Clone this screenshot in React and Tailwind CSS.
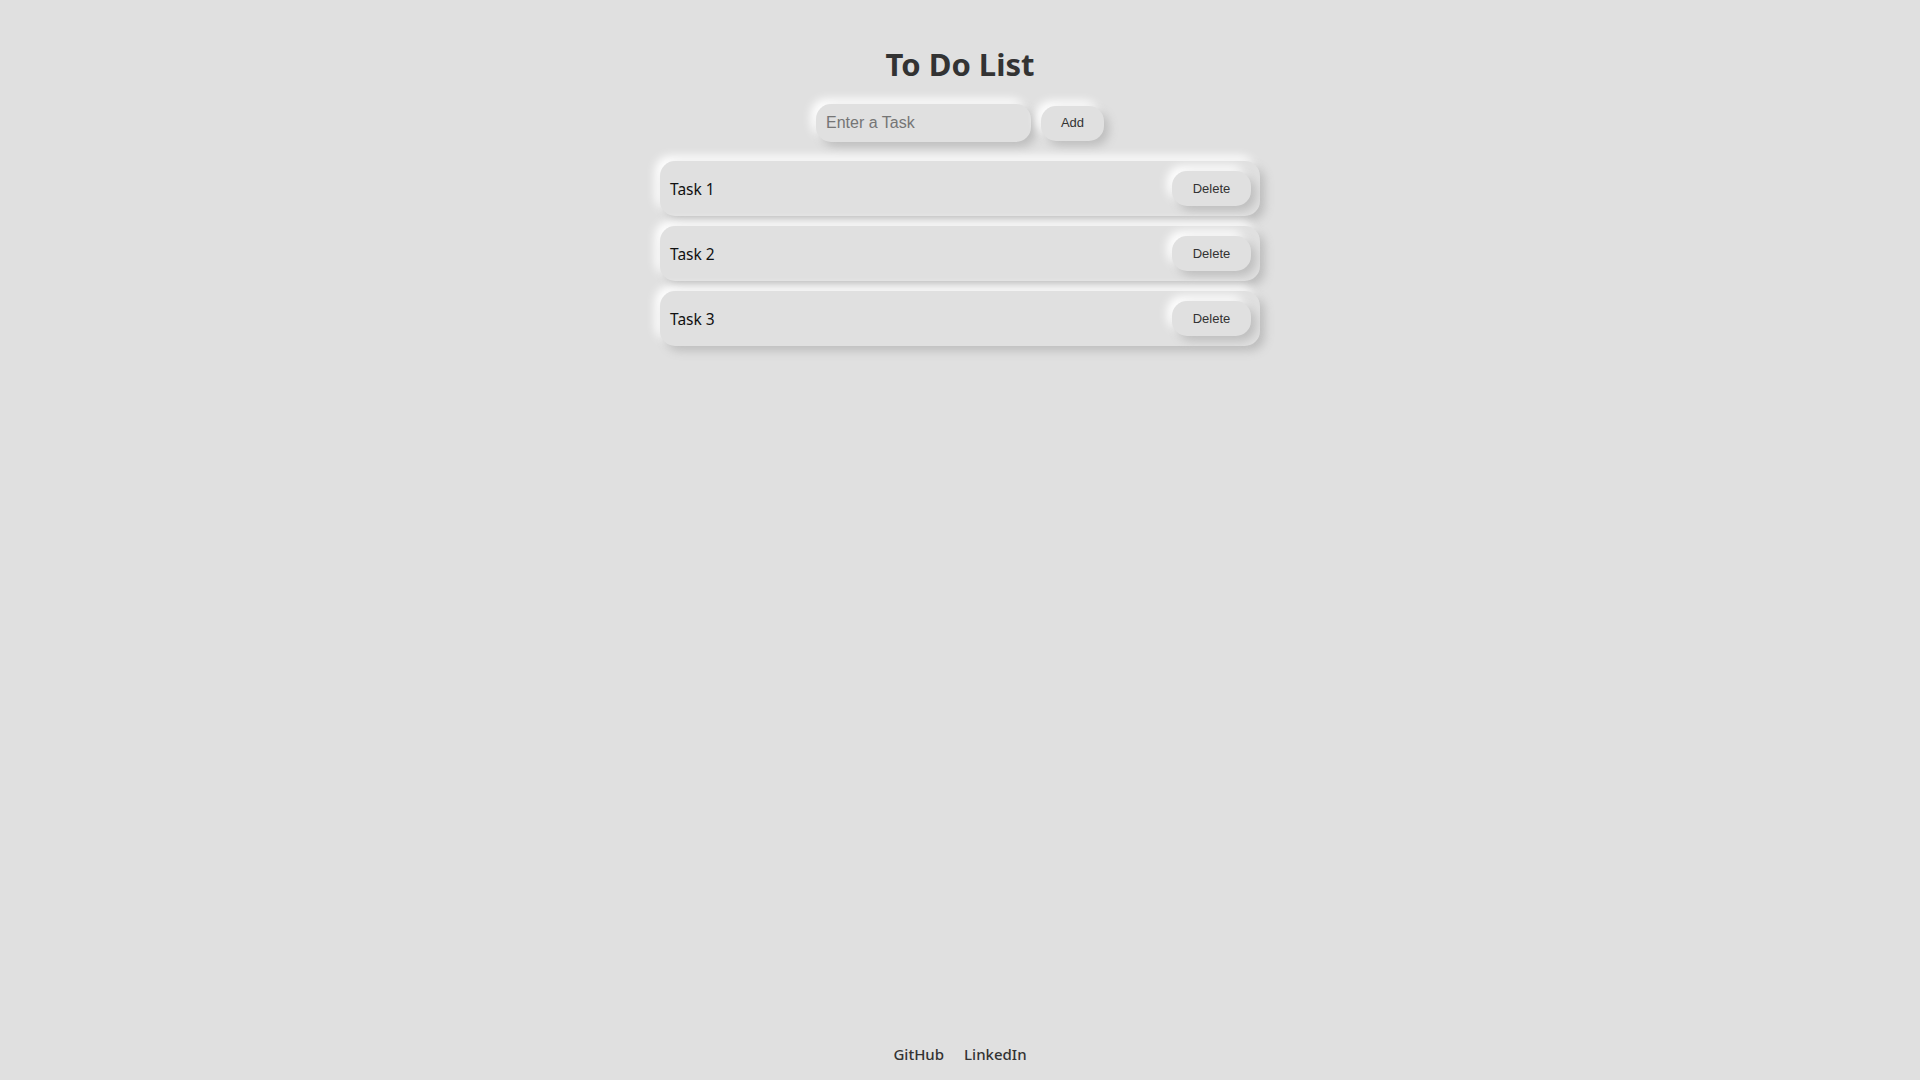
const TASKS = ["Task 1", "Task 2", "Task 3"];

export default function App() {
  return (
    <div className="min-h-screen bg-[#e0e0e0] flex flex-col items-center font-['Noto_Sans',sans-serif] text-[#333]">
      <h1 className="mt-[42px] text-[31px] leading-[44px] font-bold text-[#333]">To Do List</h1>

      <div className="mt-[18px] flex items-center gap-[10px]">
        <input
          type="text"
          placeholder="Enter a Task"
          className="w-[215px] h-[38px] px-[10px] rounded-[15px] bg-[#e0e0e0] text-[16px] font-['Liberation_Sans',sans-serif] placeholder:text-[#757575] outline-none shadow-[5px_5px_10px_#bebebe,-5px_-5px_10px_#ffffff]"
        />
        <button className="w-[63px] h-[35px] rounded-[15px] bg-[#e0e0e0] text-[13px] text-[#333] font-['Liberation_Sans',sans-serif] shadow-[5px_5px_10px_#bebebe,-5px_-5px_10px_#ffffff]">
          Add
        </button>
      </div>

      <ul className="mt-[19px] w-[600px] flex flex-col gap-[10px]">
        {TASKS.map((task) => (
          <li
            key={task}
            className="h-[55px] flex items-center justify-between pl-[10px] pr-[9px] rounded-[15px] bg-[#e0e0e0] shadow-[5px_5px_10px_#bebebe,-5px_-5px_10px_#ffffff]"
          >
            <span className="mt-[2px] text-[15.5px] text-[#111]">{task}</span>
            <button className="w-[79px] h-[35px] rounded-[15px] bg-[#e0e0e0] text-[13px] text-[#333] font-['Liberation_Sans',sans-serif] shadow-[5px_5px_10px_#bebebe,-5px_-5px_10px_#ffffff]">
              Delete
            </button>
          </li>
        ))}
      </ul>

      <footer className="mt-auto mb-[15px] flex gap-[20px] text-[15px] font-medium text-[#333]">
        <a href="#">GitHub</a>
        <a href="#">LinkedIn</a>
      </footer>
    </div>
  );
}
